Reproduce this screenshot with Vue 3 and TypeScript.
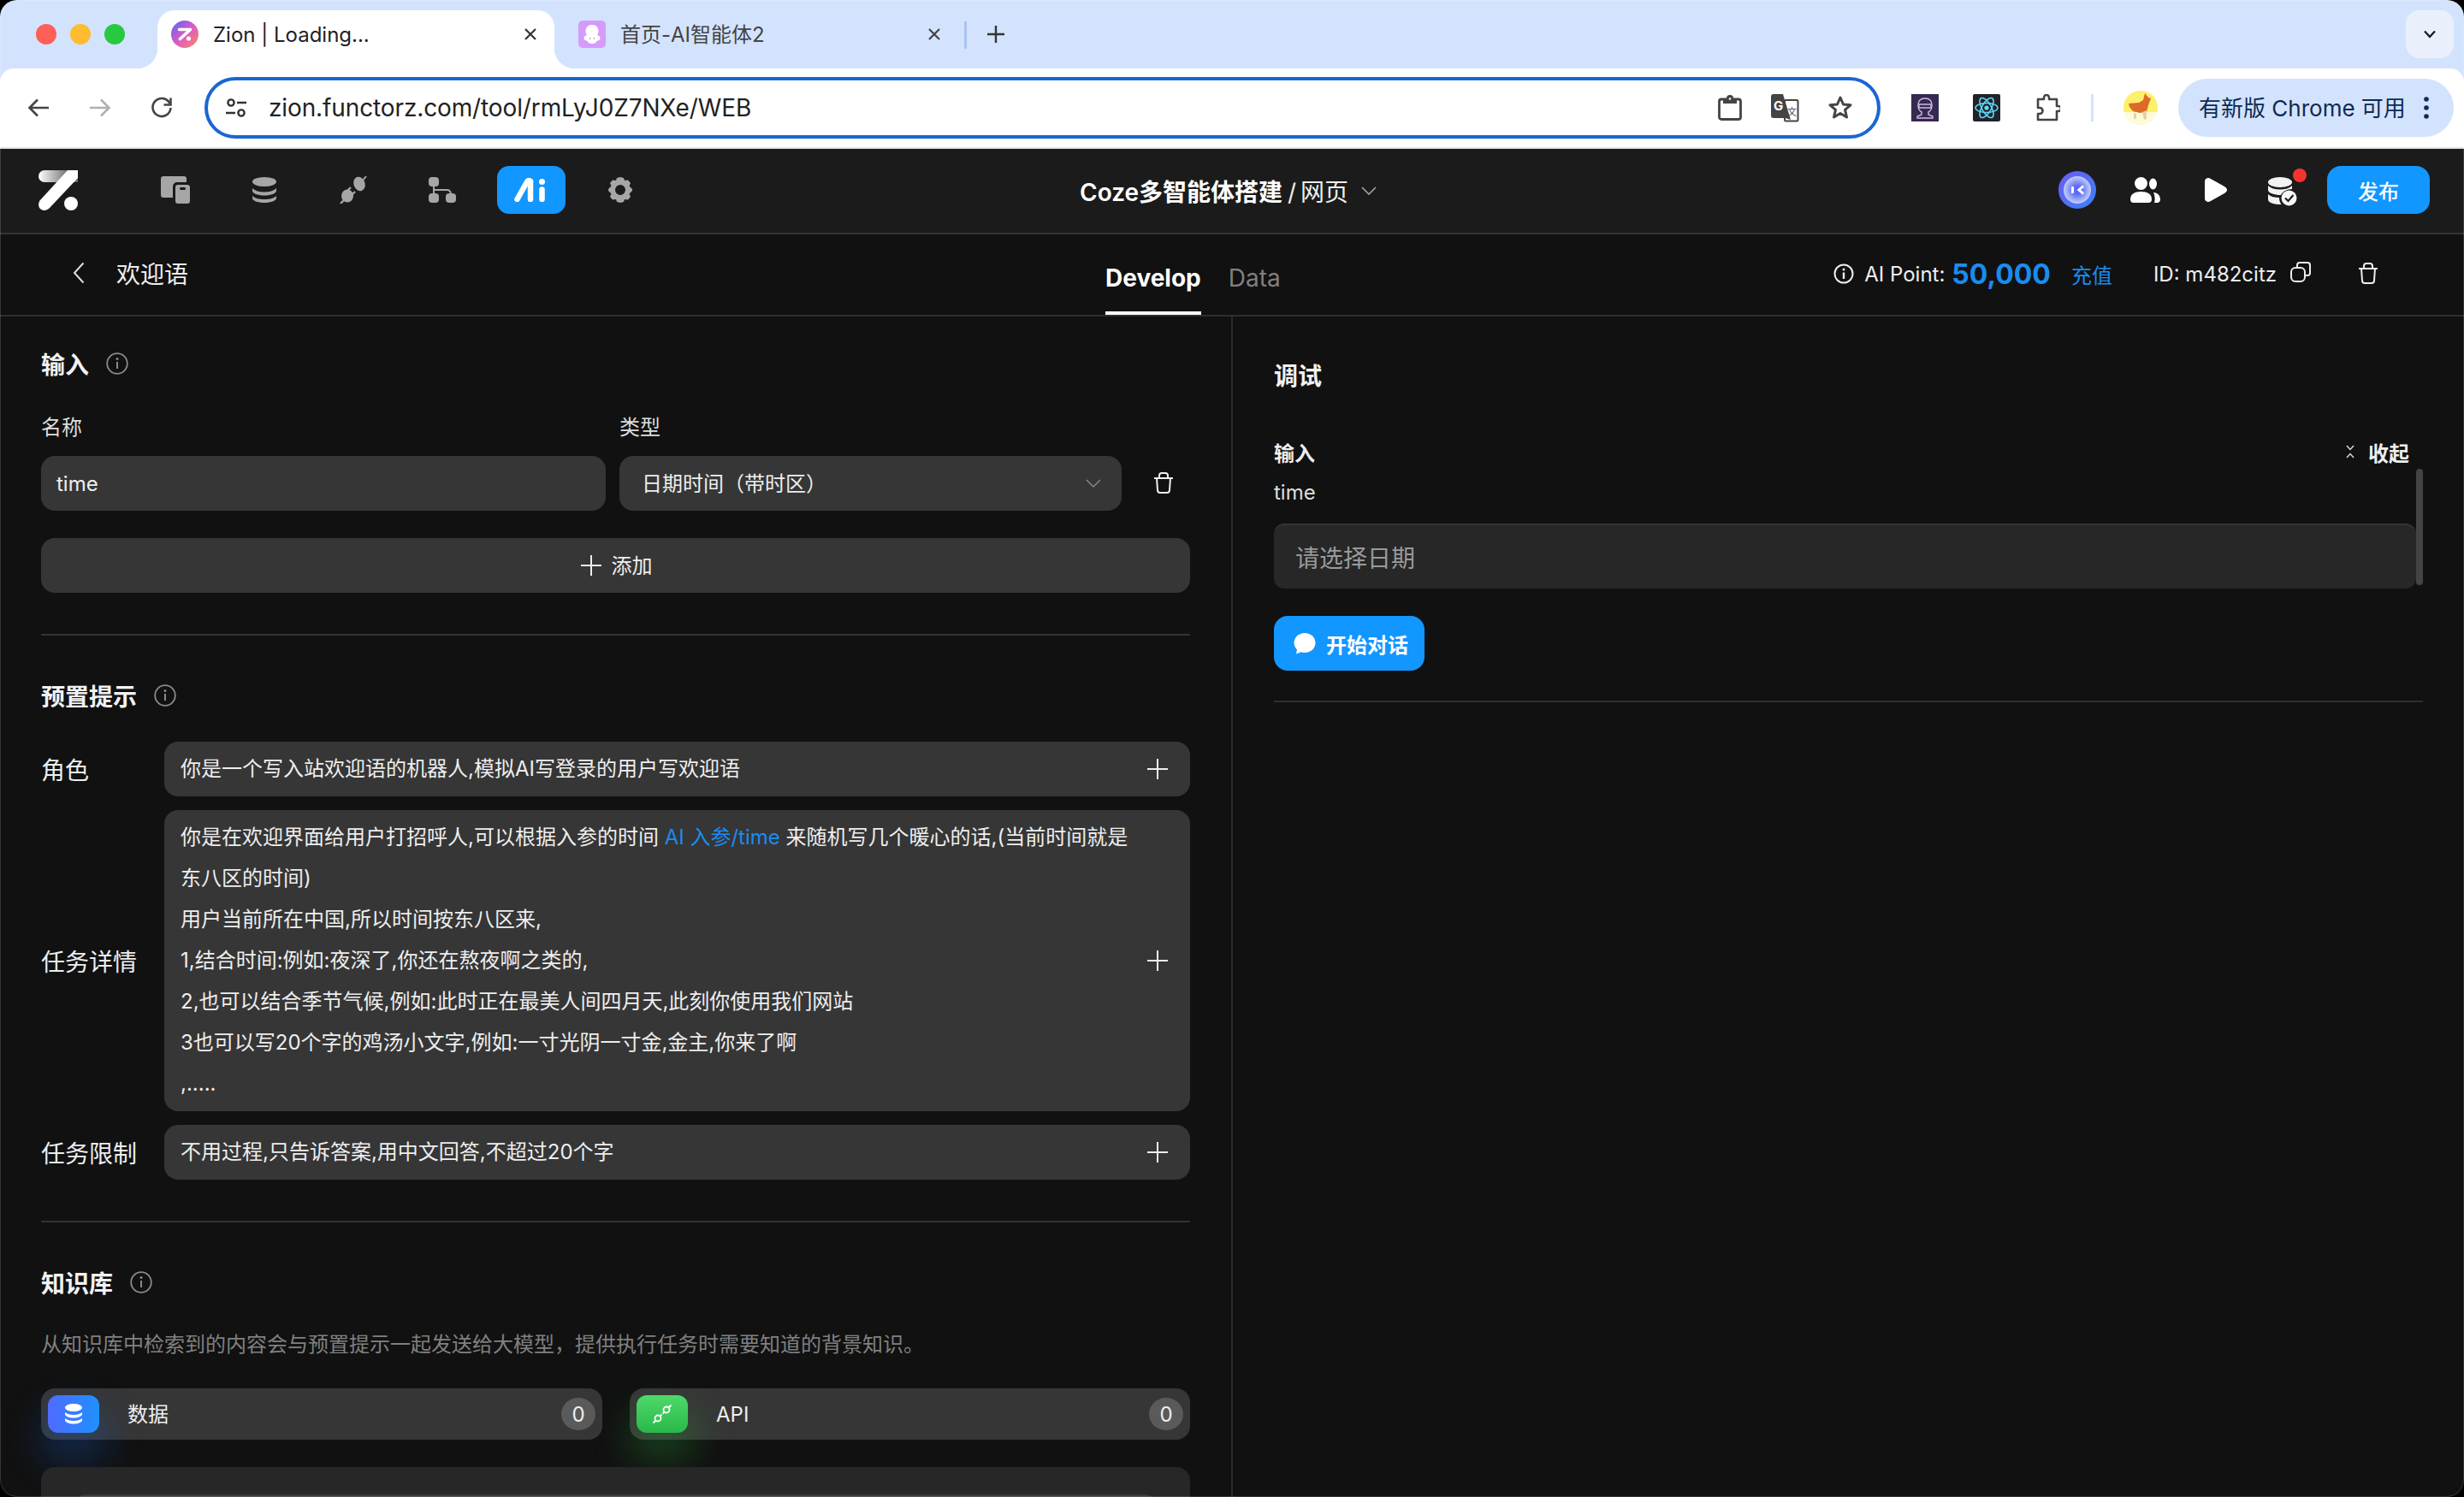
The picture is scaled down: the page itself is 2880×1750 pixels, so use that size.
<script setup lang="ts">
const navIcons = ['pages', 'data', 'plug', 'flow', 'ai', 'gear']

const detailLines = [
  '东八区的时间)',
  '用户当前所在中国,所以时间按东八区来,',
  '1,结合时间:例如:夜深了,你还在熬夜啊之类的,',
  '2,也可以结合季节气候,例如:此时正在最美人间四月天,此刻你使用我们网站',
  '3也可以写20个字的鸡汤小文字,例如:一寸光阴一寸金,金主,你来了啊',
  ',.....',
]
</script>

<template>
  <div class="window">
    <div class="chrome">
      <!-- 标签栏 -->
      <div class="tabstrip">
        <div class="lights">
          <i class="light red"></i>
          <i class="light yellow"></i>
          <i class="light green"></i>
        </div>
        <div class="tab active">
          <span class="favicon">
            <svg viewBox="0 0 32 32" width="32" height="32">
              <defs>
                <linearGradient id="fav" x1="0" y1="0" x2="1" y2="1">
                  <stop offset="0" stop-color="#5566f5" />
                  <stop offset="0.5" stop-color="#d95bc8" />
                  <stop offset="1" stop-color="#ff8a5c" />
                </linearGradient>
              </defs>
              <circle cx="16" cy="16" r="16" fill="url(#fav)" />
              <path d="M9.5 10.5h13L10.5 21.5" fill="none" stroke="#fff" stroke-width="3.6" stroke-linecap="round" stroke-linejoin="round" />
              <circle cx="20.5" cy="21" r="2.6" fill="#fff" />
            </svg>
          </span>
          <span class="tab-title">Zion | Loading...</span>
          <svg class="tab-close" viewBox="0 0 16 16" width="16" height="16"><path d="M2 2l12 12M14 2L2 14" stroke="#333" stroke-width="2.2" /></svg>
        </div>
        <div class="tab">
          <span class="favicon">
            <svg viewBox="0 0 32 32" width="32" height="32">
              <rect width="32" height="32" rx="5" fill="#d59bfb" />
              <path d="M16 5c5 0 7.5 3.500 7.5 7.500 0 2-.5 3-1.500 4.500 2 .5 3.500 1.500 3.500 3.500S24 24 22 23.500c-1 2.500-3 3.500-6 3.500s-5-1-6-3.500c-2 .5-3.500-1-3.500-3s1.500-3 3.500-3.500c-1-1.500-1.500-2.500-1.500-4.500C8.500 8.500 11 5 16 5z" fill="#fff" />
              <circle cx="13.5" cy="21" r="1" fill="#d59bfb" />
              <circle cx="18.5" cy="21" r="1" fill="#d59bfb" />
            </svg>
          </span>
          <span class="tab-title cjk">首页-AI智能体2</span>
          <svg class="tab-close" viewBox="0 0 16 16" width="16" height="16"><path d="M2 2l12 12M14 2L2 14" stroke="#444" stroke-width="2.2" /></svg>
        </div>
        <i class="tab-sep"></i>
        <svg class="tab-new" viewBox="0 0 20 20" width="20" height="20"><path d="M10 0v20M0 10h20" stroke="#333" stroke-width="2.4" /></svg>
        <span class="fill"></span>
        <span class="tab-search">
          <svg viewBox="0 0 16 10" width="16" height="10"><path d="M2 1.500l6 6.500 6-6.500" fill="none" stroke="#1f1f1f" stroke-width="2.4" /></svg>
        </span>
      </div>

      <!-- 地址栏 -->
      <div class="toolbar">
        <div class="tool-nav">
          <svg viewBox="0 0 26 24" width="26" height="24"><path d="M25 12H3M12 2.500L2.500 12l9.500 9.500" fill="none" stroke="#444" stroke-width="2.6" /></svg>
          <svg viewBox="0 0 26 24" width="26" height="24"><path d="M1 12h22M14 2.500l9.500 9.500-9.500 9.500" fill="none" stroke="#b0b0b0" stroke-width="2.6" /></svg>
          <svg viewBox="0 0 26 26" width="26" height="26"><path d="M22.500 8A10.500 10.500 0 1 0 23.500 13" fill="none" stroke="#444" stroke-width="2.6" /><path d="M23.500 1.500V9.500H15.500" fill="none" stroke="#444" stroke-width="2.6" /></svg>
        </div>
        <div class="omnibox">
          <svg class="site-icon" viewBox="0 0 26 26" width="26" height="26">
            <circle cx="7" cy="7" r="3.600" fill="none" stroke="#333" stroke-width="2.4" />
            <path d="M14 7h11M1 19h11" stroke="#333" stroke-width="2.4" />
            <circle cx="19" cy="19" r="3.600" fill="none" stroke="#333" stroke-width="2.4" />
          </svg>
          <span class="url">zion.functorz.com/tool/rmLyJ0Z7NXe/WEB</span>
          <span class="fill"></span>
          <svg class="omni-icon" viewBox="0 0 28 30" width="28" height="30">
            <rect x="1.500" y="5" width="25" height="23.500" rx="2.500" fill="none" stroke="#444" stroke-width="2.8" />
            <path d="M6 4h4a4 4 0 0 1 8 0h4v6H6z" fill="#444" />
            <circle cx="14" cy="4.500" r="1.300" fill="#fff" />
          </svg>
          <svg class="omni-icon" viewBox="0 0 34 34" width="34" height="34">
            <rect x="17" y="8" width="15.500" height="24.500" rx="1.500" fill="#fff" stroke="#444" stroke-width="2" />
            <path d="M4 1h11l9 30-6-2H4a3 3 0 0 1-3-3V4a3 3 0 0 1 3-3z" fill="#444" />
            <text x="4" y="20" class="g-letter">G</text>
            <text x="20" y="26" class="wen-letter">文</text>
          </svg>
          <svg class="omni-icon" viewBox="0 0 30 30" width="30" height="30"><path d="M15 3l3.500 8 8.500.8-6.500 5.600 2 8.600-7.500-4.500L7.500 26l2-8.600L3 11.800l8.500-.8z" fill="none" stroke="#444" stroke-width="3" stroke-linejoin="round" /></svg>
        </div>
        <div class="extensions">
          <svg viewBox="0 0 32 32" width="32" height="32">
            <rect width="32" height="32" fill="#352a50" />
            <path d="M16 5c5 0 8 3 8 8 0 4-2 7-4 8v3l5 2v2H7v-2l5-2v-3c-2-1-4-4-4-8 0-5 3-8 8-8z" fill="none" stroke="#d3b6e6" stroke-width="1.4" />
            <path d="M9 12h14v4H9z" fill="none" stroke="#d3b6e6" stroke-width="1.4" />
          </svg>
          <svg viewBox="0 0 32 32" width="32" height="32">
            <rect width="32" height="32" rx="2" fill="#20232a" />
            <g fill="none" stroke="#61dafb" stroke-width="1.5">
              <ellipse cx="16" cy="16" rx="13" ry="5.500" />
              <ellipse cx="16" cy="16" rx="13" ry="5.500" transform="rotate(60 16 16)" />
              <ellipse cx="16" cy="16" rx="13" ry="5.500" transform="rotate(120 16 16)" />
            </g>
            <circle cx="16" cy="16" r="2.600" fill="#61dafb" />
          </svg>
          <svg viewBox="0 0 30 32" width="30" height="32">
            <path d="M4 6h7V4a3 3 0 0 1 6 0v2h9v8h2a3 3 0 0 1 0 6h-2v10H4v-7h2a3.500 3.500 0 0 0 0-7H4z" fill="none" stroke="#444" stroke-width="2.6" stroke-linejoin="round" />
          </svg>
          <i class="ext-sep"></i>
          <svg class="profile" viewBox="0 0 40 40" width="40" height="40">
            <circle cx="20" cy="20" r="20" fill="#fdfbd8" />
            <path d="M0 20a20 20 0 0 1 40 0c0 2-.3 3.500-.8 5H.8C.3 23.500 0 22 0 20z" fill="#fdf06c" />
            <path d="M6 15l12-1 5-3 2-8 4 5 3 1-3 8-2 8-8 1-8-2-4-5z" fill="#de6a28" />
            <path d="M22 25l5-2 0 10-3 1zM12 26l3 1 0 6-3 0z" fill="#e8cfa8" />
          </svg>
          <div class="update-pill">
            <span class="cjk">有新版 Chrome 可用</span>
            <svg viewBox="0 0 6 26" width="6" height="26"><circle cx="3" cy="3" r="2.800" fill="#0b2b55" /><circle cx="3" cy="13" r="2.800" fill="#0b2b55" /><circle cx="3" cy="23" r="2.800" fill="#0b2b55" /></svg>
          </div>
        </div>
      </div>
    </div>

    <!-- 应用顶栏 -->
    <header class="appbar">
      <div class="appbar-left">
        <svg class="logo" viewBox="0 0 46 47" width="46" height="47">
          <defs>
            <linearGradient id="logoFade" gradientUnits="userSpaceOnUse" x1="0" y1="0" x2="36" y2="0">
              <stop offset="0" stop-color="#fff" />
              <stop offset="1" stop-color="#6a6a6a" />
            </linearGradient>
          </defs>
          <path d="M7 0h39v14H7a7 7 0 0 1 0-14z" fill="url(#logoFade)" />
          <path d="M34 0h12v9L13 44c-4 4-9 3.500-11.500 .5C-.5 41.500 0 38 1.500 35.500z" fill="#fff" />
          <circle cx="38" cy="39" r="8" fill="#fff" />
        </svg>
        <nav class="nav-icons">
          <span v-for="n in navIcons" :key="n" class="nav-item" :class="{ on: n === 'ai' }">
            <svg v-if="n === 'pages'" viewBox="0 0 34 32" width="34" height="32">
              <path d="M3 0h24a3 3 0 0 1 3 3v4H19a5 5 0 0 0-5 5v13H3a3 3 0 0 1-3-3V3a3 3 0 0 1 3-3z" fill="#a6a6a6" />
              <rect x="17" y="10" width="17" height="22" rx="3" fill="#a6a6a6" />
              <rect x="22" y="13" width="7" height="3" rx="1.500" fill="#1b1b1b" />
            </svg>
            <svg v-else-if="n === 'data'" viewBox="0 0 28 30" width="28" height="30">
              <ellipse cx="14" cy="5.500" rx="14" ry="5.500" fill="#a6a6a6" />
              <path d="M0 13c3 3 8 4.500 14 4.500S25 16 28 13v3c0 3-6 5.500-14 5.500S0 19 0 16z" fill="#a6a6a6" />
              <path d="M0 22c3 3 8 4 14 4s11-1 14-4v2.500c0 3-6 5.500-14 5.500S0 27.500 0 24.500z" fill="#a6a6a6" />
            </svg>
            <svg v-else-if="n === 'plug'" viewBox="0 0 32 32" width="32" height="32">
              <ellipse cx="23" cy="9" rx="6.500" ry="8.500" transform="rotate(-20 23 9)" fill="#a6a6a6" />
              <path d="M27 5l4-5" stroke="#a6a6a6" stroke-width="2" />
              <ellipse cx="9" cy="23" rx="7" ry="7.500" fill="#a6a6a6" />
              <path d="M9 17l4-4M14 22l4-4M5 28l-4 4" stroke="#a6a6a6" stroke-width="2.4" />
            </svg>
            <svg v-else-if="n === 'flow'" viewBox="0 0 32 30" width="32" height="30">
              <rect x="0" y="0" width="12" height="11" rx="4" fill="#a6a6a6" />
              <rect x="0" y="19" width="12" height="11" rx="4" fill="#a6a6a6" />
              <rect x="20" y="19" width="12" height="11" rx="4" fill="#a6a6a6" />
              <path d="M6 11v8M6 15h15a5 5 0 0 1 5 4" fill="none" stroke="#a6a6a6" stroke-width="2" />
            </svg>
            <svg v-else-if="n === 'ai'" viewBox="0 0 40 28" width="40" height="28">
              <path d="M3.500 25L15 4.500c1-1.800 3-2 4 0" fill="none" stroke="#fff" stroke-width="6.5" stroke-linecap="round" />
              <path d="M19 4v21" stroke="#fff" stroke-width="6.5" stroke-linecap="round" />
              <path d="M32.500 13.500V25" stroke="#fff" stroke-width="6.5" stroke-linecap="round" />
              <circle cx="32.5" cy="4.500" r="3.500" fill="#fff" />
            </svg>
            <svg v-else viewBox="0 0 28 30" width="28" height="30">
              <path fill-rule="evenodd" d="M14 0l4 1 1 3 4-.5 3 3.500-1.500 3.500L28 14v2l-3.500 3.500L26 23l-3 3.500-4-.5-1 3-4 1-4-1-1-3-4 .5L2 23l1.500-3.500L0 16v-2l3.500-3.500L2 7l3-3.500 4 .5 1-3zM14 9a6 6 0 1 0 0 12 6 6 0 0 0 0-12z" fill="#a6a6a6" />
            </svg>
          </span>
        </nav>
      </div>
      <div class="app-title">
        <span class="app-name">Coze多智能体搭建</span>
        <span class="app-page">/ 网页</span>
        <svg viewBox="0 0 18 10" width="18" height="10"><path d="M1 1l8 8 8-8" fill="none" stroke="#a6a6a6" stroke-width="1.6" /></svg>
      </div>
      <div class="appbar-right">
        <svg viewBox="0 0 44 44" width="44" height="44">
          <defs>
            <linearGradient id="coze" x1="0" y1="0" x2="1" y2="1">
              <stop offset="0" stop-color="#6a5cf5" />
              <stop offset="1" stop-color="#3b82f6" />
            </linearGradient>
            <radialGradient id="cozeIn">
              <stop offset="0.3" stop-color="#5d6bf2" />
              <stop offset="1" stop-color="#c3d0fb" />
            </radialGradient>
          </defs>
          <circle cx="22" cy="22" r="22" fill="url(#coze)" />
          <circle cx="22" cy="22" r="16" fill="url(#cozeIn)" />
          <rect x="15" y="18" width="3" height="8" rx="1" fill="#fff" />
          <path d="M29 17.500l-5 4.500 5 4.500" fill="none" stroke="#fff" stroke-width="3" />
        </svg>
        <svg viewBox="0 0 35 30" width="35" height="30">
          <ellipse cx="12.5" cy="7.500" rx="7.500" ry="7.500" fill="#fff" />
          <ellipse cx="26.5" cy="8" rx="4.500" ry="6.500" fill="#fff" />
          <path d="M0 26c0-6 5-9 12.500-9S25 20 25 26c0 2.500-1.500 4-3.500 4h-18C1.500 30 0 28.500 0 26z" fill="#fff" />
          <path d="M27 18c5 .5 8 3.500 8 8 0 2.500-1.500 4-3.500 4H28c1-2 1-8-1-12z" fill="#fff" />
        </svg>
        <svg viewBox="0 0 26 28" width="26" height="28"><path d="M0 4c0-3 3-5 6-3.500l17 9.500c4 2.500 4 5.500 0 8L6 27.500C3 29 0 27 0 24z" fill="#fff" /></svg>
        <span class="db-check">
          <svg viewBox="0 0 34 34" width="34" height="34">
            <ellipse cx="14" cy="6" rx="14" ry="6" fill="#f2f2f2" />
            <path d="M0 10c3 3 8 4.500 14 4.500S25 13 28 10v4c-6 0-11 3-13 7-8 0-15-2.500-15-6z" fill="#f2f2f2" />
            <path d="M0 20c3 3 8 4 13 4 0 3 1 6 2.500 8C7 32 0 30 0 26z" fill="#f2f2f2" />
            <circle cx="24.5" cy="24.500" r="9" fill="#f7f7f7" />
            <path d="M20 24.500l3.500 3.500 6-7" fill="none" stroke="#1b1b1b" stroke-width="2.2" />
          </svg>
          <i class="red-dot"></i>
        </span>
        <button class="publish">发布</button>
      </div>
    </header>

    <!-- 二级栏 -->
    <div class="subbar">
      <div class="sub-left">
        <svg viewBox="0 0 14 26" width="14" height="26"><path d="M12.500 1.500L2 13l10.500 11.500" fill="none" stroke="#ddd" stroke-width="2" /></svg>
        <span>欢迎语</span>
      </div>
      <div class="sub-tabs">
        <span class="sub-tab on">Develop</span>
        <span class="sub-tab">Data</span>
      </div>
      <div class="sub-right">
        <svg class="ic" viewBox="0 0 24 24" width="24" height="24"><circle cx="12" cy="12" r="10.500" fill="none" stroke="#eee" stroke-width="2" /><path d="M12 10.500V18" stroke="#eee" stroke-width="2.4" /><circle cx="12" cy="7" r="1.500" fill="#eee" /></svg>
        <span class="point-label">AI Point:</span>
        <span class="point-num">50,000</span>
        <span class="recharge">充值</span>
        <span class="app-id">ID: m482citz</span>
        <svg class="copy" viewBox="0 0 24 24" width="24" height="24">
          <path d="M8 6.500V4a3 3 0 0 1 3-3h9a3 3 0 0 1 3 3v9a3 3 0 0 1-3 3h-2" fill="none" stroke="#eee" stroke-width="2" />
          <rect x="1" y="7" width="16" height="16" rx="5" fill="none" stroke="#eee" stroke-width="2" />
        </svg>
        <svg class="trash-top" viewBox="0 0 24 26" width="24" height="26">
          <path d="M1 7h22M7 7V4a3 3 0 0 1 3-3h4a3 3 0 0 1 3 3v3M4 7l1 14a3 3 0 0 0 3 3h8a3 3 0 0 0 3-3l1-14" fill="none" stroke="#eee" stroke-width="2" stroke-linejoin="round" />
        </svg>
      </div>
    </div>

    <!-- 主体 -->
    <main class="body">
      <section class="left">
        <div class="head first">
          <span>输入</span>
          <svg class="i-info" viewBox="0 0 26 26" width="26" height="26"><circle cx="13" cy="13" r="11.800" fill="none" stroke="#8a8a8a" stroke-width="1.8" /><path d="M13 11v8" stroke="#8a8a8a" stroke-width="2" /><circle cx="13" cy="7.500" r="1.500" fill="#8a8a8a" /></svg>
        </div>
        <div class="field-labels">
          <span class="col-name">名称</span>
          <span>类型</span>
        </div>
        <div class="field-row">
          <div class="box name-box">time</div>
          <div class="box type-box">
            <span class="cjk">日期时间（带时区）</span>
            <svg viewBox="0 0 18 10" width="18" height="10"><path d="M1 1l8 8 8-8" fill="none" stroke="#8a8a8a" stroke-width="1.4" /></svg>
          </div>
          <svg class="row-trash" viewBox="0 0 24 26" width="24" height="26">
            <path d="M1 7h22M7 7V4a3 3 0 0 1 3-3h4a3 3 0 0 1 3 3v3M4 7l1 14a3 3 0 0 0 3 3h8a3 3 0 0 0 3-3l1-14" fill="none" stroke="#eee" stroke-width="2" stroke-linejoin="round" />
          </svg>
        </div>
        <div class="add-btn">
          <svg viewBox="0 0 24 24" width="24" height="24"><path d="M12 0v24M0 12h24" stroke="#eee" stroke-width="2" /></svg>
          <span class="cjk">添加</span>
        </div>
        <hr class="rule rule-a" />

        <div class="head">
          <span>预置提示</span>
          <svg class="i-info" viewBox="0 0 26 26" width="26" height="26"><circle cx="13" cy="13" r="11.800" fill="none" stroke="#8a8a8a" stroke-width="1.8" /><path d="M13 11v8" stroke="#8a8a8a" stroke-width="2" /><circle cx="13" cy="7.500" r="1.500" fill="#8a8a8a" /></svg>
        </div>
        <div class="prompts">
          <div class="prompt">
            <span class="prompt-label">角色</span>
            <div class="prompt-box">
              <p>你是一个写入站欢迎语的机器人,模拟AI写登录的用户写欢迎语</p>
              <svg class="plus" viewBox="0 0 24 24" width="24" height="24"><path d="M12 0v24M0 12h24" stroke="#eee" stroke-width="2" /></svg>
            </div>
          </div>
          <div class="prompt">
            <span class="prompt-label">任务详情</span>
            <div class="prompt-box tall">
              <div class="lines">
                <p>你是在欢迎界面给用户打招呼人,可以根据入参的时间 <em>AI 入参/time</em> 来随机写几个暖心的话,(当前时间就是</p>
                <p v-for="l in detailLines" :key="l">{{ l }}</p>
              </div>
              <svg class="plus" viewBox="0 0 24 24" width="24" height="24"><path d="M12 0v24M0 12h24" stroke="#eee" stroke-width="2" /></svg>
            </div>
          </div>
          <div class="prompt">
            <span class="prompt-label">任务限制</span>
            <div class="prompt-box">
              <p>不用过程,只告诉答案,用中文回答,不超过20个字</p>
              <svg class="plus" viewBox="0 0 24 24" width="24" height="24"><path d="M12 0v24M0 12h24" stroke="#eee" stroke-width="2" /></svg>
            </div>
          </div>
        </div>
        <hr class="rule rule-b" />

        <div class="head kb">
          <span>知识库</span>
          <svg class="i-info" viewBox="0 0 26 26" width="26" height="26"><circle cx="13" cy="13" r="11.800" fill="none" stroke="#8a8a8a" stroke-width="1.8" /><path d="M13 11v8" stroke="#8a8a8a" stroke-width="2" /><circle cx="13" cy="7.500" r="1.500" fill="#8a8a8a" /></svg>
        </div>
        <p class="kb-desc">从知识库中检索到的内容会与预置提示一起发送给大模型，提供执行任务时需要知道的背景知识。</p>
        <div class="kb-cards">
          <div class="kb-card">
            <span class="kb-icon blue">
              <svg viewBox="0 0 22 24" width="22" height="24">
                <ellipse cx="11" cy="4.500" rx="10" ry="4.500" fill="#fff" />
                <path d="M1 10c2 2 6 3 10 3s8-1 10-3v2c0 2.500-4.500 4.500-10 4.500S1 14.500 1 12z" fill="#fff" />
                <path d="M1 17c2 2 6 3 10 3s8-1 10-3v2c0 2.500-4.500 4.500-10 4.500S1 21.500 1 19z" fill="#fff" />
              </svg>
            </span>
            <span class="kb-name cjk">数据</span>
            <span class="kb-count">0</span>
          </div>
          <div class="kb-card">
            <span class="kb-icon green">
              <svg viewBox="0 0 24 24" width="24" height="24">
                <g fill="none" stroke="#fff" stroke-width="1.8">
                  <circle cx="7" cy="17" r="3.500" />
                  <circle cx="17" cy="7" r="3.500" />
                  <path d="M1.500 22.500l3-3M19.500 4.500l3-3M9.500 14.500l2-2M12.500 11.500l2-2" />
                </g>
              </svg>
            </span>
            <span class="kb-name">API</span>
            <span class="kb-count">0</span>
          </div>
        </div>
        <div class="next-card">
          <div class="next-inner"></div>
        </div>
      </section>

      <section class="right">
        <h3 class="debug-title">调试</h3>
        <div class="debug-head">
          <span>输入</span>
          <span class="collapse">
            <svg viewBox="0 0 10 16" width="10" height="16"><path d="M1 1l4 4.500L9 1M1 15l4-4.500L9 15" fill="none" stroke="#ddd" stroke-width="1.4" /></svg>
            收起
          </span>
        </div>
        <div class="debug-fields">
          <div class="debug-label">time</div>
          <div class="date-input">请选择日期</div>
          <i class="scrollbar"></i>
        </div>
        <button class="start">
          <svg viewBox="0 0 26 26" width="26" height="26"><path d="M13 1c7 0 12.500 5 12.500 11.500S20 24 13 24c-1.500 0-3-.2-4.500-.7L3 25.500l1-5C2 18.300.5 15.500.5 12.500.5 6 6 1 13 1z" fill="#fff" /></svg>
          <span>开始对话</span>
        </button>
        <hr class="rule rule-c" />
      </section>
    </main>
  </div>
</template>

<style>
html,
body {
  margin: 0;
  background: #000;
}
</style>

<style scoped>
.window {
  width: 2880px;
  height: 1750px;
  overflow: hidden;
  position: relative;
  display: flex;
  flex-direction: column;
  font-family: Inter, "Noto Sans CJK SC", sans-serif;
  background: #111;
  border-radius: 20px;
  box-sizing: border-box;
}
.window::after {
  content: "";
  position: absolute;
  inset: 0;
  border-radius: 20px;
  box-shadow: inset 0 0 0 1px rgba(255, 255, 255, 0.16);
  pointer-events: none;
}
/* CJK glyphs sit a little low in these single-line boxes */
.cjk {
  margin-top: -3px;
}

/* chrome */
.chrome {
  flex: none;
  background: #d3e3fd;
}
.tabstrip {
  height: 80px;
  display: flex;
  align-items: flex-end;
}
.lights {
  display: flex;
  gap: 16px;
  padding: 0 38px 0 42px;
  align-self: flex-start;
  margin-top: 28px;
}
.light {
  width: 24px;
  height: 24px;
  border-radius: 50%;
}
.red { background: #fe5f57; }
.yellow { background: #febc2e; }
.green { background: #28c840; }
.tab {
  width: 464px;
  height: 68px;
  box-sizing: border-box;
  display: flex;
  align-items: center;
  padding: 0 20px 12px 16px;
  gap: 17px;
  color: #444;
  font-size: 24px;
  margin-right: 16px;
  position: relative;
}
.tab.active {
  background: #fff;
  border-radius: 20px 20px 0 0;
  color: #222;
}
.tab.active::before,
.tab.active::after {
  content: "";
  position: absolute;
  bottom: 0;
  width: 24px;
  height: 24px;
}
.tab.active::before {
  left: -24px;
  background: radial-gradient(circle at 0 0, #d3e3fd 24px, #fff 24.5px);
}
.tab.active::after {
  right: -24px;
  background: radial-gradient(circle at 100% 0, #d3e3fd 24px, #fff 24.5px);
}
.tab:not(.active) {
  width: 465px;
  margin-right: 0;
  padding-left: 12px;
  padding-right: 29px;
}
.favicon {
  display: flex;
  flex: none;
}
.tab-title {
  flex: 1;
  white-space: nowrap;
}
.tab-sep {
  width: 3px;
  height: 32px;
  background: #a9c4ee;
  align-self: flex-start;
  margin: 25px 0 0 -2px;
}
.tab-new {
  align-self: flex-start;
  margin: 30px 0 0 24px;
}
.fill {
  flex: 1;
}
.tab-search {
  width: 56px;
  height: 56px;
  align-self: flex-start;
  margin: 12px 12px 0 0;
  background: #e9f0fc;
  border-radius: 16px;
  display: flex;
  align-items: center;
  justify-content: center;
}
.toolbar {
  height: 94px;
  box-sizing: border-box;
  background: #fff;
  border-bottom: 2px solid #e3e3e3;
  border-radius: 16px 16px 0 0;
  display: flex;
  align-items: center;
  padding: 0 12px 0 32px;
}
.tool-nav {
  display: flex;
  align-items: center;
  gap: 46px;
  width: 207px;
  flex: none;
}
.omnibox {
  width: 1959px;
  height: 72px;
  flex: none;
  box-sizing: border-box;
  border: 4px solid #1a66d4;
  border-radius: 36px;
  display: flex;
  align-items: center;
  padding: 0 28px 0 20px;
  gap: 33px;
}
.site-icon {
  margin-right: -8px;
}
.url {
  font-size: 28px;
  color: #222;
  letter-spacing: -0.12px;
  white-space: nowrap;
}
.omni-icon {
  flex: none;
}
.g-letter {
  font-size: 15px;
  font-weight: 700;
  fill: #fff;
}
.wen-letter {
  font-size: 11px;
  fill: #444;
}
.extensions {
  flex: 1;
  display: flex;
  align-items: center;
  gap: 40px;
  padding-left: 36px;
}
.ext-sep {
  width: 3px;
  height: 32px;
  background: #d3e3fd;
  margin: 0 -5px 0 -4px;
}
.profile {
  flex: none;
  margin-right: -16px;
}
.update-pill {
  height: 68px;
  width: 322px;
  box-sizing: border-box;
  background: #d3e3fd;
  border-radius: 34px;
  display: flex;
  align-items: center;
  padding: 0 29px 0 24px;
  justify-content: space-between;
  font-size: 26px;
  color: #0b2b55;
  white-space: nowrap;
  flex: none;
}

/* app bar */
.appbar {
  height: 100px;
  flex: none;
  box-sizing: border-box;
  background: #1b1b1b;
  border-bottom: 2px solid #333;
  display: flex;
  align-items: center;
  padding: 0 40px 2px 45px;
  position: relative;
}
.appbar-left {
  display: flex;
  align-items: center;
  flex: 1;
}
.logo {
  flex: none;
  margin-right: 78px;
}
.nav-icons {
  display: flex;
  align-items: center;
}
.nav-item {
  width: 104px;
  display: flex;
  justify-content: center;
}
.nav-item:first-child {
  margin-left: -16px;
}
.nav-item.on {
  width: 80px;
  height: 56px;
  margin: 0 12px;
  background: #1296ff;
  border-radius: 14px;
  align-items: center;
}
.app-title {
  position: absolute;
  left: 1262px;
  top: 0;
  height: 98px;
  display: flex;
  align-items: center;
  gap: 6px;
  white-space: nowrap;
  font-size: 28px;
  color: #eee;
}
.app-name {
  font-weight: 600;
  color: #fff;
}
.app-page {
  word-spacing: -3px;
}
.app-title svg {
  margin-left: 9px;
}
.appbar-right {
  display: flex;
  align-items: center;
  gap: 40px;
}
.appbar-right > svg:nth-child(3) {
  margin-left: 12px;
  margin-right: 8px;
}
.db-check {
  position: relative;
  display: flex;
  margin-top: 4px;
}
.red-dot {
  position: absolute;
  right: -11px;
  top: -10px;
  width: 16px;
  height: 16px;
  border-radius: 50%;
  background: #f5342e;
}
.publish {
  width: 120px;
  height: 56px;
  background: #1296ff;
  border: 0;
  border-radius: 16px;
  color: #fff;
  font-size: 24px;
  font-weight: 500;
  font-family: inherit;
  margin-left: -5px;
}

/* sub bar */
.subbar {
  height: 96px;
  flex: none;
  box-sizing: border-box;
  background: #111;
  border-bottom: 2px solid #2e2e2e;
  display: flex;
  align-items: center;
  position: relative;
  padding: 0 100px 0 85px;
  color: #eee;
}
.sub-left {
  display: flex;
  align-items: center;
  gap: 37px;
  font-size: 28px;
  flex: 1;
  margin-top: -4px;
}
.sub-tabs {
  position: absolute;
  left: 1292px;
  top: 0;
  bottom: 0;
  display: flex;
  gap: 32px;
}
.sub-tab {
  font-size: 28px;
  color: #808080;
  display: flex;
  align-items: center;
  padding-top: 8px;
  box-sizing: border-box;
  height: 94px;
}
.sub-tab.on {
  color: #fff;
  font-weight: 700;
  border-bottom: 4px solid #fff;
  padding-top: 12px;
}
.sub-right {
  display: flex;
  align-items: center;
  font-size: 24px;
  white-space: nowrap;
  margin-top: -2px;
}
.ic {
  margin-left: 1px;
}
.point-label {
  margin-left: 12px;
}
.point-num {
  margin-left: 8px;
  font-size: 32px;
  font-weight: 700;
  color: #1a8cf0;
}
.recharge {
  margin-left: 24px;
  color: #1a8cf0;
}
.app-id {
  margin-left: 48px;
}
.copy {
  margin-left: 16px;
  margin-top: -4px;
}
.trash-top {
  margin-left: 55px;
}

/* body */
.body {
  flex: 1;
  min-height: 0;
  display: flex;
  overflow: hidden;
}
.left {
  width: 1441px;
  flex: none;
  box-sizing: border-box;
  border-right: 2px solid #2a2a2a;
  padding: 0 48px;
  color: #eee;
}
.head {
  display: flex;
  align-items: center;
  gap: 20px;
  font-size: 28px;
  font-weight: 600;
  color: #f2f2f2;
  height: 40px;
  margin-top: 35px;
}
.field-labels {
  display: flex;
  font-size: 24px;
  color: #ddd;
  margin-top: 34px;
  height: 36px;
  align-items: center;
}
.col-name {
  width: 676px;
}
.field-row {
  display: flex;
  align-items: center;
  margin-top: 18px;
}
.box {
  height: 64px;
  box-sizing: border-box;
  background: #363636;
  border-radius: 16px;
  font-size: 24px;
  color: #eee;
  display: flex;
  align-items: center;
}
.name-box {
  width: 660px;
  padding-left: 18px;
  margin-right: 16px;
}
.type-box {
  width: 587px;
  padding: 0 24px 0 26px;
  justify-content: space-between;
}
.row-trash {
  margin-left: 37px;
}
.add-btn {
  height: 64px;
  margin-top: 32px;
  padding-left: 2px;
  background: #363636;
  border-radius: 16px;
  display: flex;
  align-items: center;
  justify-content: center;
  gap: 12px;
  font-size: 24px;
  color: #eee;
}
.rule {
  border: 0;
  height: 2px;
  background: #333;
  margin: 0;
}
.rule-a {
  margin-top: 48px;
  margin-bottom: 30px;
}
.rule-a + .head {
  margin-top: 0;
  padding-top: 20px;
}
.prompts {
  display: flex;
  flex-direction: column;
  gap: 16px;
  margin-top: 34px;
}
.prompt {
  display: flex;
  align-items: center;
}
.prompt-label {
  width: 144px;
  flex: none;
  font-size: 28px;
  color: #eee;
}
.prompt-box {
  flex: 1;
  min-height: 64px;
  box-sizing: border-box;
  background: #363636;
  border-radius: 16px;
  display: flex;
  align-items: center;
  justify-content: space-between;
  padding: 8px 26px 8px 19px;
  font-size: 24px;
  color: #eee;
}
.prompt-box p {
  margin: 0;
  line-height: 48px;
  white-space: nowrap;
}
.prompt-box em {
  font-style: normal;
  color: #1a8cf0;
}
.rule-b {
  margin-top: 48px;
}
.head.kb {
  margin-top: 50px;
}
.kb-desc {
  margin: 33px 0 0;
  line-height: 40px;
  font-size: 24px;
  color: #808080;
  white-space: nowrap;
}
.kb-cards {
  display: flex;
  justify-content: space-between;
  margin-top: 31px;
}
.kb-card {
  width: 656px;
  height: 60px;
  box-sizing: border-box;
  background: #363636;
  border-radius: 16px;
  display: flex;
  align-items: center;
  padding: 0 8px;
  font-size: 24px;
  color: #eee;
}
.kb-card:last-child {
  width: 655px;
}
.kb-icon {
  width: 60px;
  height: 44px;
  border-radius: 12px;
  display: flex;
  align-items: center;
  justify-content: center;
  flex: none;
}
.kb-icon.blue {
  background: linear-gradient(90deg, #4f6bff, #1f90ff);
  box-shadow: 0 26px 44px 8px rgba(24, 110, 240, 0.26);
}
.kb-icon.green {
  background: linear-gradient(180deg, #4ed96a, #2ab84a);
  box-shadow: 0 26px 44px 8px rgba(46, 190, 60, 0.26);
}
.kb-name {
  margin-left: 33px;
  flex: 1;
}
.kb-count {
  width: 40px;
  height: 38px;
  border-radius: 50%;
  background: #5a5a5a;
  display: flex;
  align-items: center;
  justify-content: center;
}
.next-card {
  margin-top: 32px;
  height: 120px;
  background: #272727;
  border-radius: 16px;
  padding: 32px 40px 0;
  position: relative;
}
.next-inner {
  height: 60px;
  background: #3a3a3a;
  border-radius: 12px;
}
.right {
  flex: 1;
  box-sizing: border-box;
  padding: 0 48px;
  color: #eee;
}
.debug-title {
  margin: 50px 0 0;
  font-size: 28px;
  font-weight: 600;
  line-height: 40px;
  color: #f2f2f2;
}
.debug-head {
  display: flex;
  justify-content: space-between;
  align-items: center;
  margin-top: 50px;
  font-size: 24px;
  font-weight: 600;
  height: 36px;
}
.collapse {
  display: flex;
  align-items: center;
  gap: 16px;
  margin-right: 16px;
}
.debug-fields {
  position: relative;
  padding-right: 8px;
}
.debug-label {
  margin-top: 12px;
  font-size: 24px;
  line-height: 36px;
  color: #ddd;
}
.date-input {
  margin-top: 18px;
  height: 76px;
  box-sizing: border-box;
  background: #272727;
  border-top: 2px solid #343434;
  border-radius: 12px;
  display: flex;
  align-items: center;
  padding-left: 25px;
  font-size: 28px;
  color: #9a9a9a;
}
.scrollbar {
  position: absolute;
  right: 0;
  bottom: 4px;
  width: 8px;
  height: 136px;
  background: #444;
  border-radius: 4px;
}
.start {
  display: flex;
  align-items: center;
  gap: 12px;
  width: 176px;
  height: 64px;
  margin-top: 32px;
  padding: 0 0 0 23px;
  box-sizing: border-box;
  background: #1296ff;
  border: 0;
  border-radius: 16px;
  color: #fff;
  font-size: 24px;
  font-weight: 600;
  font-family: inherit;
}
.rule-c {
  margin-top: 35px;
  background: #2e2e2e;
}
</style>
